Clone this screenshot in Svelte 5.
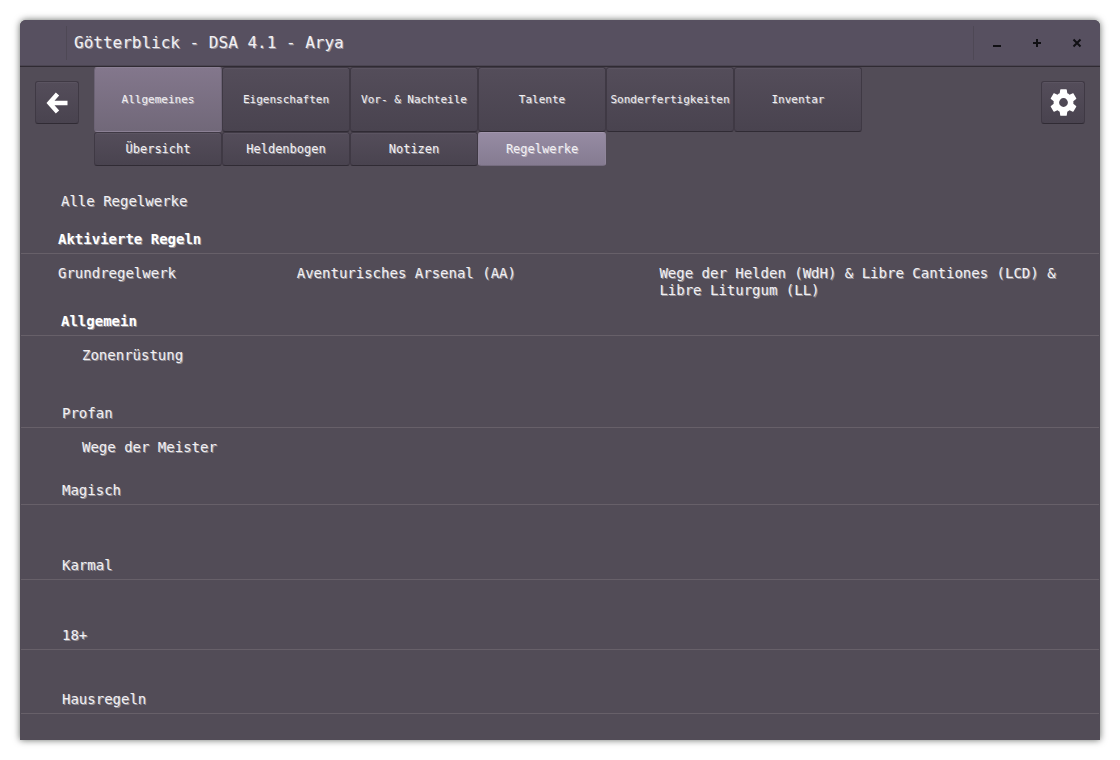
<script>
  const tabs = ['Allgemeines', 'Eigenschaften', 'Vor- & Nachteile', 'Talente', 'Sonderfertigkeiten', 'Inventar'];
  const pages = ['Übersicht', 'Heldenbogen', 'Notizen', 'Regelwerke'];
  let tab = $state('Allgemeines');
  let page = $state('Regelwerke');

  const sections = [
    { title: 'Allgemein', rules: ['Zonenrüstung'], size: 'huge', strong: true },
    { title: 'Profan', rules: ['Wege der Meister'], size: 'large' },
    { title: 'Magisch', rules: [], size: 'medium' },
    { title: 'Karmal', rules: [], size: 'small' },
    { title: '18+', rules: [], size: 'tiny' },
    { title: 'Hausregeln', rules: [], size: 'none' }
  ];
</script>

<div class="window">
  <header>
    <span class="slot"></span>
    <h1>Götterblick - DSA 4.1 - Arya</h1>
    <div class="controls">
      <button aria-label="Minimieren">
        <svg width="12" height="12" viewBox="0 0 12 12"><path d="M2 9h8" /></svg>
      </button>
      <button aria-label="Maximieren">
        <svg width="12" height="12" viewBox="0 0 12 12"><path d="M2 6h8M6 2v8" /></svg>
      </button>
      <button aria-label="Schließen">
        <svg width="12" height="12" viewBox="0 0 12 12"><path d="M2.5 2.5l7 7M9.5 2.5l-7 7" /></svg>
      </button>
    </div>
  </header>

  <div class="toolbar">
    <button class="tool raised" aria-label="Zurück">
      <svg width="24" height="24" viewBox="0 0 24 24">
        <path d="M12.500 3L4.500 12l8 9M4.500 12H22.500" fill="none" stroke="#fff" stroke-width="4.500" />
      </svg>
    </button>
    <nav>
      <div class="tabs">
        {#each tabs as name}
          <button class="raised" class:active={tab === name} onclick={() => (tab = name)}>{name}</button>
        {/each}
      </div>
      <div class="pages">
        {#each pages as name}
          <button class="raised" class:active={page === name} onclick={() => (page = name)}>{name}</button>
        {/each}
      </div>
    </nav>
    <button class="tool raised" aria-label="Einstellungen">
      <svg width="33" height="33" viewBox="0 0 24 24">
        <path
          fill="#fff"
          d="M19.140 12.940c.04-.3.06-.61.06-.94 0-.32-.02-.64-.07-.94l2.030-1.580c.18-.14.23-.41.12-.61l-1.920-3.320c-.12-.22-.37-.29-.59-.22l-2.390.96c-.5-.38-1.030-.7-1.620-.94l-.36-2.540c-.04-.24-.24-.41-.48-.41h-3.840c-.24 0-.43.17-.47.41l-.36 2.540c-.59.24-1.130.57-1.620.94l-2.390-.96c-.22-.08-.47 0-.59.22L2.740 8.870c-.12.21-.08.47.12.61l2.030 1.580c-.05.3-.09.63-.09.94s.02.64.07.94l-2.030 1.580c-.18.14-.23.41-.12.61l1.920 3.320c.12.22.37.29.59.22l2.390-.96c.5.38 1.030.7 1.620.94l.36 2.540c.05.24.24.41.48.41h3.840c.24 0 .44-.17.47-.41l.36-2.540c.59-.24 1.130-.56 1.620-.94l2.390.96c.22.08.47 0 .59-.22l1.920-3.320c.12-.22.07-.47-.12-.61l-2.010-1.580zM12 15.200a3.200 3.200 0 1 1 0-6.400a3.200 3.200 0 0 1 0 6.400z"
        />
      </svg>
    </button>
  </div>

  <main>
    <p class="all">Alle Regelwerke</p>
    <section>
      <h2 class="strong first">Aktivierte Regeln</h2>
      <ul class="enabled">
        <li>Grundregelwerk</li>
        <li>Aventurisches Arsenal (AA)</li>
        <li>Wege der Helden (WdH) & Libre Cantiones (LCD) & Libre Liturgum (LL)</li>
      </ul>
    </section>
    {#each sections as section}
      <section>
        <h2 class:strong={section.strong}>{section.title}</h2>
        <ul class="rules {section.size}">
          {#each section.rules as rule}
            <li>{rule}</li>
          {/each}
        </ul>
      </section>
    {/each}
  </main>
</div>

<style>
  :global(body) {
    background: #fff;
  }

  .window {
    box-sizing: border-box;
    min-height: calc(100vh - 40px);
    margin: 20px;
    border-radius: 6px 6px 0 0;
    background: #524c57;
    box-shadow: 0 0 7px rgba(0, 8, 0, 0.6);
    color: #f2f0f3;
    font: 14px/18px 'DejaVu Sans Mono', monospace;
    text-shadow: 1px 1px 0 rgba(255, 255, 255, 0.4);
    display: flow-root;
  }

  header {
    display: flex;
    align-items: center;
    height: 46px;
    border-bottom: 1px solid #302b33;
    border-radius: 6px 6px 0 0;
    background: #575060;
    box-shadow: inset 0 -1px #4b4552;
  }

  .slot {
    width: 46px;
    height: 34px;
    border-right: 1px solid #4e4855;
  }

  h1 {
    flex: 1;
    margin: 0;
    padding-left: 7px;
    font-size: 16px;
    font-weight: 400;
    line-height: 20px;
  }

  .controls {
    display: flex;
    height: 34px;
    padding: 0 3px;
    border-left: 1px solid #4e4855;
  }

  button {
    display: flex;
    align-items: center;
    justify-content: center;
    box-sizing: border-box;
    padding: 0;
    border: 0;
    background: none;
    color: inherit;
    font: inherit;
    text-shadow: inherit;
    white-space: nowrap;
  }

  .controls button {
    width: 40px;
  }

  .controls path {
    fill: none;
    stroke: #111014;
    stroke-width: 2;
  }

  .toolbar {
    display: flex;
    gap: 15px;
    padding: 0 15px;
  }

  .raised {
    border: 1px solid #3f3944;
    border-bottom-color: #302b34;
    border-radius: 3px;
    background: linear-gradient(#544d5a, #49434f);
    box-shadow: inset 0 1px #5b5461;
  }

  .tool {
    flex: none;
    width: 44px;
    height: 43px;
    margin-top: 14px;
  }

  nav {
    flex: 1;
  }

  .tabs,
  .pages {
    display: flex;
  }

  .tabs button,
  .pages button {
    width: 128px;
  }

  .tabs button {
    height: 65px;
    font-size: 11px;
  }

  .pages button {
    height: 34px;
    font-size: 12px;
  }

  .tabs .active {
    border-color: #8b8094 #6c6375 #8b8094 #6c6375;
    background: linear-gradient(#83778c, #716879);
    box-shadow: none;
  }

  .pages .active {
    border-color: #a195ac #8f859a #756c7f;
    background: linear-gradient(#968ba3, #857b91);
    box-shadow: none;
  }

  main {
    padding: 26px 1px 0;
  }

  p,
  ul,
  h2 {
    margin: 0;
    padding: 0;
    list-style: none;
  }

  .all {
    padding: 0 40px 20px;
  }

  h2 {
    padding: 0 41px 5px;
    border-bottom: 1px solid #676069;
    font-size: 14px;
    font-weight: 400;
  }

  .strong {
    color: #fff;
    font-weight: 700;
    padding-left: 40px;
  }

  .first {
    padding-left: 37px;
  }

  .enabled {
    display: grid;
    grid-template-columns: 239fr 363fr 420fr;
    box-sizing: border-box;
    min-height: 58px;
    padding: 11px 20px 0 37px;
    line-height: 17px;
  }

  .rules {
    box-sizing: border-box;
    padding: 10px 61px 0;
  }

  .huge {
    min-height: 68px;
  }

  .large {
    min-height: 53px;
  }

  .medium {
    min-height: 51px;
  }

  .small {
    min-height: 46px;
  }

  .tiny {
    min-height: 40px;
  }
</style>
